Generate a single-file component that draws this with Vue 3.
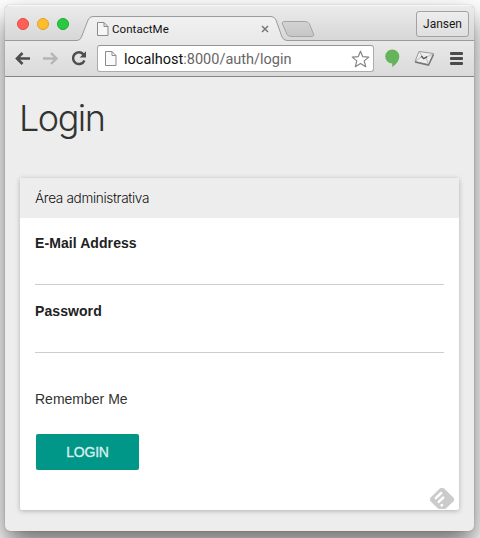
<script setup>
const fields = [
  { id: 'email', label: 'E-Mail Address', type: 'email' },
  { id: 'password', label: 'Password', type: 'password' },
]
</script>

<template>
  <div class="desktop">
    <div class="window">
      <header class="tabstrip">
        <svg class="strip-art" width="469" height="36" viewBox="5 5 469 36">
          <defs>
            <linearGradient id="tab" x1="0" y1="0" x2="0" y2="1">
              <stop offset="0" stop-color="#f1f1f1" />
              <stop offset="1" stop-color="#e9e9e9" />
            </linearGradient>
            <linearGradient id="newtab" x1="0" y1="0" x2="0" y2="1">
              <stop offset="0" stop-color="#d3d3d3" />
              <stop offset="1" stop-color="#c6c6c6" />
            </linearGradient>
          </defs>
          <path d="M4 40.5H77Q80 40.5 81.5 37L88 20Q89.5 16.5 93 16.5H271Q274.500 16.500 276 20L282 37Q283.500 40.500 287 40.500H475V42H4Z" fill="url(#tab)" />
          <path d="M4 40.500H77Q80 40.500 81.500 37L88 20Q89.500 16.500 93 16.500H271Q274.500 16.500 276 20L282 37Q283.500 40.500 287 40.500H475" fill="none" stroke="#9b9b9b" />
          <path d="M285 21.500H305Q308 21.500 309.500 24L313.500 34Q314.500 36.500 311 36.500H291Q288 36.500 286.800 34L282.500 24Q281.500 21.500 285 21.500Z" fill="url(#newtab)" stroke="#a5a5a5" />
        </svg>
        <div class="lights"><i class="red" /><i class="yellow" /><i class="green" /></div>
        <div class="tab">
          <svg width="12" height="14" viewBox="0 0 12 14"><path d="M.5.5H7L11 4.500V13.500H.5ZM7 .5V4.500H11" fill="#f6f6f6" stroke="#8b8b8b" /></svg>
          <span class="tab-title">ContactMe</span>
          <svg class="close" width="8" height="8" viewBox="0 0 8 8"><path d="M1 1L7 7M7 1L1 7" stroke="#777" stroke-width="1.500" /></svg>
        </div>
        <div class="profile">Jansen</div>
      </header>

      <nav class="toolbar">
        <svg class="nav-icons" width="82" height="18" viewBox="0 0 82 18">
          <path d="M16 8.500H3M8.500 3L3 8.500L8.500 14" fill="none" stroke="#4d4d4d" stroke-width="2.600" />
          <path d="M29 8.500H42M37 3L42.500 8.500L37 14" fill="none" stroke="#b5b5b5" stroke-width="2.400" />
          <path d="M69.400 4.300A5.900 5.900 0 1 0 70.400 10.500" fill="none" stroke="#4d4d4d" stroke-width="2.500" />
          <path d="M72 1.300V7.500H65.700Z" fill="#4d4d4d" />
        </svg>
        <div class="omnibox">
          <svg width="12" height="15" viewBox="0 0 12 15"><path d="M.5.5H7L11 4.500V14.500H.5ZM7 .5V4.500H11" fill="#fafafa" stroke="#8b8b8b" /></svg>
          <span class="url">localhost<span class="path">:8000/auth/login</span></span>
          <svg class="star" width="19" height="18" viewBox="0 0 19 18"><path d="M9.500 1.200L11.800 6.700L17.800 7.100L13.200 10.900L14.700 16.700L9.500 13.500L4.300 16.700L5.800 10.900L1.200 7.100L7.200 6.700Z" fill="#fff" stroke="#858585" stroke-width="1.200" stroke-linejoin="round" /></svg>
        </div>
        <svg class="balloon" width="15" height="19" viewBox="0 0 15 19"><path d="M7.300.5A7 7 0 0 1 14.300 7.500C14.300 11.500 11 15.700 7.200 18V14.500A7 7 0 0 1 7.300.5Z" fill="#65b35a" /></svg>
        <svg class="mail" width="21" height="17" viewBox="0 0 21 17">
          <path d="M5 1.500L19.500 3.500L14.500 14.500L1 11.500Z" fill="#eee" stroke="#999" />
          <path d="M1 12L14.500 15.300L19.600 4.500" fill="none" stroke="#777" stroke-width="1.400" />
          <path d="M5.500 2L9.800 8.500L19 4M1.500 11.200L7.800 6.500M14.300 14L12 7.500" fill="none" stroke="#aaa" stroke-width=".8" />
          <path d="M7.200 6L9.700 8.700L13 6.600" fill="none" stroke="#555" stroke-width="1.300" />
        </svg>
        <div class="menu"><i /><i /><i /></div>
      </nav>

      <main class="page">
        <h1>Login</h1>
        <section class="card">
          <div class="card-head">Área administrativa</div>
          <form class="card-body" @submit.prevent>
            <div v-for="f in fields" :key="f.id" class="field">
              <label :class="f.id" :for="f.id">{{ f.label }}</label>
              <input :id="f.id" :type="f.type" />
            </div>
            <div class="remember"><span>Remember Me</span></div>
            <button type="submit"><span>LOGIN</span></button>
          </form>
          <svg class="badge" width="26" height="23" viewBox="0 0 26 23">
            <path d="M10.800 1.600Q13 -.3 15.200 1.600L24.300 10.500Q26 12.500 24.300 14.500L17 21.500Q16 22 15 22H11Q10 22 9 21.500L1.700 14.500Q0 12.500 1.700 10.500Z" fill="#cbcbcb" />
            <path d="M6.800 11.200L12.200 6M9.700 14.900L14.200 10.600M12.600 18.400L13 18" stroke="#fff" stroke-width="2.500" stroke-linecap="round" />
          </svg>
        </section>
      </main>
    </div>
  </div>
</template>

<style>
body { overflow: hidden; }
</style>

<style scoped>
* { box-sizing: border-box; }
.desktop {
  width: 480px;
  height: 538px;
  padding: 5px 6px 7px 5px;
  overflow: hidden;
  background: #fff;
  font-family: "Liberation Sans", sans-serif;
}
.window {
  width: 469px;
  height: 526px;
  border-radius: 5px;
  background: #ededed;
  overflow: hidden;
  box-shadow: 0 0 1px rgba(0, 0, 0, .5), 0 14px 28px rgba(0, 0, 0, .58);
}
.tabstrip {
  position: relative;
  height: 36px;
  display: flex;
  background: linear-gradient(#ececec, #d6d6d6);
}
.tabstrip::before {
  content: "";
  position: absolute;
  inset: 0 0 auto;
  height: 1px;
  background: #f8f8f8;
}
.strip-art { position: absolute; inset: 0; }
.lights, .tab, .profile { position: relative; }
.lights { display: flex; gap: 8px; padding: 13px 0 0 12px; width: 87px; }
.lights i { width: 12px; height: 12px; border-radius: 50%; border: 1px solid; }
.red { background: #ff5f57; border-color: #e24a43 !important; }
.yellow { background: #ffbd2e; border-color: #dfa023 !important; }
.green { background: #28ca42; border-color: #1eaa30 !important; }
.tab { display: flex; align-items: center; width: 179px; height: 24px; margin-top: 12px; padding-left: 5px; }
.tab-title { font: 11.500px/14px Roboto, sans-serif; color: #111; margin-left: 3px; letter-spacing: .06px; }
.close { margin-left: auto; margin-right: 2px; }
.profile {
  width: 53px;
  height: 26px;
  margin: 6px 5px 0 auto;
  border: 1px solid #a2a2a2;
  border-radius: 3px;
  background: linear-gradient(#ededed, #dfdfdf);
  font: 12px/25px Roboto, sans-serif;
  text-align: center;
  color: #1a1a1a;
}
.toolbar {
  height: 36px;
  display: flex;
  align-items: center;
  padding-left: 9px;
  background: linear-gradient(#e9e9e9, #dadada);
  border-bottom: 1px solid #858585;
}
.nav-icons { flex: none; }
.omnibox {
  display: flex;
  align-items: center;
  width: 277px;
  height: 27px;
  margin-left: 1px;
  padding: 0 3px 0 7px;
  background: #fff;
  border: 1px solid #ababab;
  border-top-color: #959595;
  border-radius: 3px;
}
.url { position: relative; top: 1px; font: 14.500px/20px Roboto, sans-serif; color: #111; margin-left: 7px; letter-spacing: 0; }
.path { color: #666; }
.star { margin-left: auto; }
.balloon { margin-left: 11px; }
.mail { margin-left: 14px; }
.menu { display: flex; flex-direction: column; gap: 2px; margin-left: 15px; }
.menu i { width: 13px; height: 3px; border-radius: 1px; background: #4b4b4b; }
.page { height: 454px; padding: 19px 15px 21px; display: flex; flex-direction: column; }
h1 { margin: 0 0 0 -1px; font: 300 36px/44px Inter, sans-serif; letter-spacing: -1.500px; color: #333; }
.card { position: relative; width: 439px; height: 332px; margin-top: 38px; background: #fff; border-radius: 2px; box-shadow: 0 1px 5px rgba(0, 0, 0, .26); }
.card-head { height: 40px; padding-left: 15px; background: #ededed; border-radius: 2px 2px 0 0; font: 300 13.600px/40px Inter, sans-serif; letter-spacing: -.34px; color: #111; }
.card-body { padding: 15px; }
.field { height: 68px; }
label { display: block; font-weight: 700; font-size: 14px; line-height: 20px; color: #212121; letter-spacing: .08px; }
input { display: block; width: 100%; height: 32px; padding: 0; border: 0; border-bottom: 1px solid #cecece; background: transparent; outline: 0; }
.remember { padding-top: 20px; font-size: 14px; line-height: 20px; color: #333; }
button { display: block; width: 103px; height: 36px; margin: 25px 0 0 1px; padding: 0; border: 0; border-radius: 2px; background: #009688; color: #d9efed; font: 14px/36px "Liberation Sans", sans-serif; -webkit-text-stroke: .35px #d9efed; letter-spacing: -.25px; }
.badge { position: absolute; right: 4px; bottom: 0; }
</style>
